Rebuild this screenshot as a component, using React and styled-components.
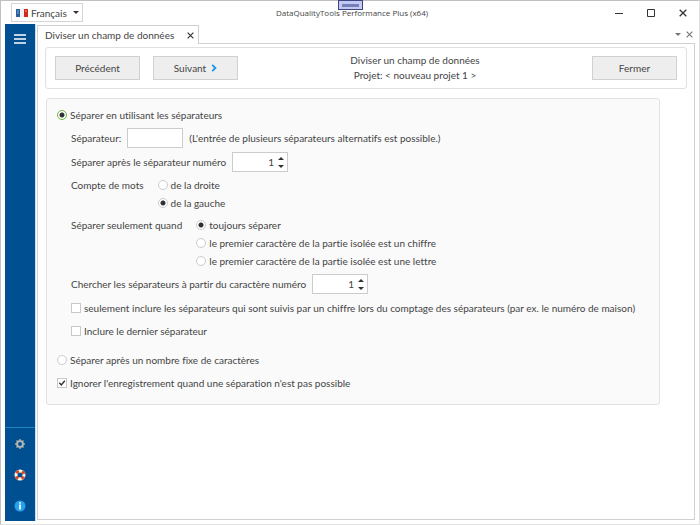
import React, { useState } from "react";
import styled, { createGlobalStyle } from "styled-components";

const GlobalStyle = createGlobalStyle`
  * {
    box-sizing: border-box;
  }
  body {
    margin: 0;
    background: #ffffff;
  }
  body, button, input, select {
    font-family: Lato, "Open Sans", sans-serif;
    font-size: 10px;
    font-variant-ligatures: none;
    line-height: 18px;
    color: #444444;
  }
`;

const Window = styled.div`
  position: relative;
  display: flex;
  flex-direction: column;
  min-height: 100vh;
  padding: 0 4px 3px;
  border: 1px solid #e2e2e2;
  border-top-color: #c0c0c0;
  border-left-color: #c0c0c0;
`;

const Grip = styled.div`
  position: absolute;
  top: -1px;
  left: 50%;
  width: 25px;
  height: 10px;
  margin-left: -12px;
  padding: 3px;
  border: 1px solid #3d4680;
  background: #c3c9f3;
  &::before {
    content: "";
    display: block;
    height: 3px;
    background: #7580b8;
  }
`;

const TitleBar = styled.header`
  display: grid;
  grid-template-columns: 1fr auto 1fr;
  align-items: center;
  height: 23px;
  margin-right: -4px;
`;

const Title = styled.h1`
  margin: 0;
  font-family: "Open Sans", sans-serif;
  font-size: 8px;
  font-weight: 400;
`;

const Language = styled.label`
  display: flex;
  align-items: center;
  width: 72px;
  height: 19px;
  margin-left: 6px;
  padding: 0 3px 0 4px;
  border: 1px solid #d5d5d5;
  svg {
    flex: none;
  }
`;

const LanguageSelect = styled.select`
  flex: 1;
  min-width: 0;
  height: 17px;
  padding: 0 0 0 3px;
  border: 0;
  background: transparent;
  appearance: none;
`;

const WindowButtons = styled.div`
  display: flex;
  justify-content: flex-end;
`;

const IconButton = styled.button`
  display: flex;
  align-items: center;
  justify-content: center;
  width: ${(props) => props.$width}px;
  height: ${(props) => props.$height || 22}px;
  padding: 0;
  border: 0;
  background: none;
`;

const Body = styled.div`
  display: flex;
  flex: 1;
`;

const Sidebar = styled.nav`
  display: flex;
  flex-direction: column;
  justify-content: space-between;
  width: 31px;
  border-right: 1px solid #c6dcf0;
  background: #004f90;
`;

const SidebarTools = styled.div`
  border-top: 1px solid #1b86c4;
`;

const Main = styled.main`
  display: flex;
  flex: 1;
  flex-direction: column;
  min-width: 0;
  padding: 1px 0 1px 1px;
`;

const TabStrip = styled.div`
  display: flex;
  height: 19px;
`;

const Tab = styled.div`
  display: flex;
  align-items: center;
  justify-content: space-between;
  width: 162px;
  padding: 0 1px 0 7px;
  border: 1px solid #d0d0d0;
  border-bottom: 0;
  white-space: nowrap;
`;

const TabRest = styled.div`
  display: flex;
  flex: 1;
  align-items: center;
  justify-content: flex-end;
  border-bottom: 1px solid #d0d0d0;
`;

const Page = styled.div`
  flex: 1;
  padding: 3px 7px 20px;
  border: 1px solid #d0d0d0;
  border-top: 0;
`;

const Toolbar = styled.div`
  display: flex;
  align-items: center;
  gap: 13px;
  padding: 5px 9px;
  border: 1px solid #e0e0e0;
  border-radius: 3px;
`;

const ToolButton = styled.button`
  display: flex;
  align-items: center;
  justify-content: center;
  gap: 5px;
  width: 85px;
  height: 24px;
  padding: 0;
  border: 1px solid #d0d0d0;
  background: #eeeeee;
`;

const Heading = styled.div`
  flex: 1;
  line-height: 15px;
  text-align: center;
`;

const Panel = styled.form`
  display: flex;
  flex-direction: column;
  gap: 4px;
  margin: 9px 27px 0 1px;
  padding: 7px 10px 12px;
  border: 1px solid #e2e2e2;
  border-radius: 3px;
  background: #fafafa;
`;

const Section = styled.div`
  display: flex;
  flex-direction: column;
  gap: 4px;
  margin-bottom: 6px;
  padding-left: 14px;
`;

const Row = styled.div`
  display: flex;
  align-items: center;
  min-height: 19px;
`;

const Field = styled.label`
  display: flex;
  align-items: center;
  gap: 6px;
  height: 20px;
`;

const Choices = styled.div`
  display: flex;
  gap: 14px;
`;

const Option = styled.label`
  display: flex;
  align-items: center;
  gap: 3px;
  min-height: 18px;
`;

const Radio = styled.input.attrs({ type: "radio" })`
  flex: none;
  width: 10px;
  height: 10px;
  margin: 0;
  border: 1px solid #cccccc;
  border-radius: 50%;
  background: #ffffff;
  appearance: none;
  &:checked {
    border-color: ${(props) => (props.$main ? "#6cb83a" : "#cccccc")};
    background: radial-gradient(circle, #303030 2px, #ffffff 3px);
  }
`;

const Check = styled.span`
  display: grid;
  flex: none;
  width: 10px;
  height: 10px;
  input,
  svg {
    grid-area: 1 / 1;
    width: 10px;
    height: 10px;
    margin: 0;
  }
  input {
    border: 1px solid #c8c8c8;
    background: #ffffff;
    appearance: none;
  }
  svg {
    visibility: hidden;
    pointer-events: none;
  }
  input:checked + svg {
    visibility: visible;
  }
`;

const TextInput = styled.input`
  width: 56px;
  height: 20px;
  padding: 0 4px;
  border: 1px solid #cccccc;
  background: #ffffff;
`;

const Spinner = styled.span`
  display: flex;
  width: 56px;
  height: 20px;
  border: 1px solid #cccccc;
  background: #ffffff;
  input {
    flex: 1;
    min-width: 0;
    padding: 0 2px 0 0;
    border: 0;
    background: none;
    text-align: right;
    appearance: textfield;
  }
  input::-webkit-inner-spin-button {
    appearance: none;
  }
`;

const Steps = styled.span`
  display: flex;
  flex-direction: column;
  justify-content: center;
  width: 11px;
`;

function Triangle({ up, color = "#333333" }) {
  return (
    <svg width="6" height="3" viewBox="0 0 6 3" aria-hidden="true">
      <path d={up ? "M0 3 3 0 6 3Z" : "M0 0h6L3 3Z"} fill={color} />
    </svg>
  );
}

function Cross({ size = 8, color = "#333333" }) {
  return (
    <svg width={size} height={size} viewBox="0 0 8 8" aria-hidden="true">
      <path d="M.7.7 7.3 7.3M7.3.7.7 7.3" stroke={color} strokeWidth="1.3" />
    </svg>
  );
}

function Flag() {
  return (
    <svg width="12" height="8" viewBox="0 0 12 8" aria-hidden="true">
      <rect width="12" height="8" fill="#f2f2f2" />
      <rect width="4" height="8" fill="#2d5f9f" />
      <rect x="1" y="1" width="2" height="4" fill="#4f83bd" />
      <rect x="8" width="4" height="8" fill="#cf2b1e" />
      <rect x="9" y="1" width="2" height="2" fill="#e8624c" />
    </svg>
  );
}

function Gear() {
  return (
    <svg width="12" height="12" viewBox="0 0 12 12" aria-hidden="true">
      <path
        d="M6 1v10M1 6h10M2.5 2.5l7 7M9.5 2.5l-7 7"
        stroke="#a5a8a8"
        strokeWidth="1.5"
      />
      <circle cx="6" cy="6" r="2.9" fill="#004f90" stroke="#b5b7b5" strokeWidth="1.9" />
    </svg>
  );
}

function Lifebuoy() {
  return (
    <svg width="12" height="12" viewBox="0 0 12 12" aria-hidden="true">
      <circle cx="6" cy="6" r="4" fill="none" stroke="#ffffff" strokeWidth="3" />
      <circle
        cx="6"
        cy="6"
        r="4"
        fill="none"
        stroke="#d94a20"
        strokeWidth="3"
        strokeDasharray="3.14 3.14"
        transform="rotate(22.5 6 6)"
      />
    </svg>
  );
}

function Info() {
  return (
    <svg width="12" height="12" viewBox="0 0 12 12" aria-hidden="true">
      <circle cx="6" cy="6" r="5.5" fill="#27a0ee" />
      <path d="M6 2.2v1.5M6 4.5v5" stroke="#ffffff" strokeWidth="1.7" />
    </svg>
  );
}

function NumberField({ label }) {
  const [value, setValue] = useState(1);
  return (
    <Field>
      {label}
      <Spinner>
        <input
          type="number"
          min="1"
          aria-label={label}
          value={value}
          onChange={(e) => setValue(Number(e.target.value))}
        />
        <Steps>
          <IconButton type="button" $width={10} $height={8} aria-label="Augmenter" onClick={() => setValue(value + 1)}>
            <Triangle up />
          </IconButton>
          <IconButton
            type="button"
            $width={10}
            $height={8}
            aria-label="Diminuer"
            onClick={() => setValue(Math.max(1, value - 1))}
          >
            <Triangle />
          </IconButton>
        </Steps>
      </Spinner>
    </Field>
  );
}

function CheckOption({ children, defaultChecked }) {
  return (
    <Row>
      <Option>
        <Check>
          <input type="checkbox" defaultChecked={defaultChecked} />
          <svg viewBox="0 0 10 10" aria-hidden="true">
            <path d="M2.3 4.8 4.3 7 7.8 2.8" fill="none" stroke="#333333" strokeWidth="1.4" />
          </svg>
        </Check>
        {children}
      </Option>
    </Row>
  );
}

function RadioGroup({ label, name, options, selected }) {
  return (
    <Choices role="radiogroup" aria-label={label}>
      <span>{label}</span>
      <div>
        {options.map((option) => (
          <Option key={option}>
            <Radio name={name} defaultChecked={option === selected} />
            {option}
          </Option>
        ))}
      </div>
    </Choices>
  );
}

export default function App() {
  return (
    <>
      <GlobalStyle />
      <Window>
        <TitleBar>
          <Language>
            <Flag />
            <LanguageSelect aria-label="Langue">
              <option>Français</option>
            </LanguageSelect>
            <Triangle />
          </Language>
          <Title>DataQualityTools Performance Plus (x64)</Title>
          <WindowButtons>
            <IconButton $width={32} aria-label="Réduire">
              <svg width="8" height="8" viewBox="0 0 8 8">
                <path d="M0 4.5h8" stroke="#333333" />
              </svg>
            </IconButton>
            <IconButton $width={32} aria-label="Agrandir">
              <svg width="8" height="8" viewBox="0 0 8 8">
                <path d="M.5.5h7v7h-7z" fill="none" stroke="#333333" />
              </svg>
            </IconButton>
            <IconButton $width={32} aria-label="Quitter">
              <Cross />
            </IconButton>
          </WindowButtons>
        </TitleBar>
        <Grip />
        <Body>
          <Sidebar>
            <IconButton $width={30} $height={30} aria-label="Menu">
              <svg width="12" height="10" viewBox="0 0 12 10">
                <path d="M0 1h12M0 5h12M0 9h12" stroke="#ffffff" strokeWidth="1.4" />
              </svg>
            </IconButton>
            <SidebarTools>
              <IconButton $width={30} $height={31} aria-label="Options">
                <Gear />
              </IconButton>
              <IconButton $width={30} $height={31} aria-label="Aide">
                <Lifebuoy />
              </IconButton>
              <IconButton $width={30} $height={31} aria-label="Informations">
                <Info />
              </IconButton>
            </SidebarTools>
          </Sidebar>
          <Main>
            <TabStrip>
              <Tab>
                Diviser un champ de données
                <IconButton $width={14} $height={16} aria-label="Fermer l'onglet">
                  <Cross size={7} />
                </IconButton>
              </Tab>
              <TabRest>
                <IconButton $width={12} $height={16} aria-label="Liste des onglets">
                  <Triangle color="#777777" />
                </IconButton>
                <IconButton $width={11} $height={16} aria-label="Fermer la page">
                  <Cross size={7} color="#777777" />
                </IconButton>
              </TabRest>
            </TabStrip>
            <Page>
              <Toolbar>
                <ToolButton>Précédent</ToolButton>
                <ToolButton>
                  Suivant
                  <svg width="6" height="8" viewBox="0 0 6 8" aria-hidden="true">
                    <path d="M1.2.8 4.4 4 1.2 7.2" fill="none" stroke="#1a98e8" strokeWidth="1.9" />
                  </svg>
                </ToolButton>
                <Heading>
                  <div>Diviser un champ de données</div>
                  <div>Projet: &lt; nouveau projet 1 &gt;</div>
                </Heading>
                <ToolButton>Fermer</ToolButton>
              </Toolbar>
              <Panel>
                <Option>
                  <Radio name="mode" defaultChecked $main />
                  Séparer en utilisant les séparateurs
                </Option>
                <Section>
                  <Field>
                    Séparateur:
                    <TextInput type="text" />
                    (L'entrée de plusieurs séparateurs alternatifs est possible.)
                  </Field>
                  <NumberField label="Séparer après le séparateur numéro" />
                  <RadioGroup
                    label="Compte de mots"
                    name="direction"
                    options={["de la droite", "de la gauche"]}
                    selected="de la gauche"
                  />
                  <RadioGroup
                    label="Séparer seulement quand"
                    name="condition"
                    options={[
                      "toujours séparer",
                      "le premier caractère de la partie isolée est un chiffre",
                      "le premier caractère de la partie isolée est une lettre",
                    ]}
                    selected="toujours séparer"
                  />
                  <NumberField label="Chercher les séparateurs à partir du caractère numéro" />
                  <CheckOption>
                    seulement inclure les séparateurs qui sont suivis par un chiffre lors du comptage des séparateurs
                    (par ex. le numéro de maison)
                  </CheckOption>
                  <CheckOption>Inclure le dernier séparateur</CheckOption>
                </Section>
                <Row>
                  <Option>
                    <Radio name="mode" />
                    Séparer après un nombre fixe de caractères
                  </Option>
                </Row>
                <CheckOption defaultChecked>
                  Ignorer l'enregistrement quand une séparation n'est pas possible
                </CheckOption>
              </Panel>
            </Page>
          </Main>
        </Body>
      </Window>
    </>
  );
}
